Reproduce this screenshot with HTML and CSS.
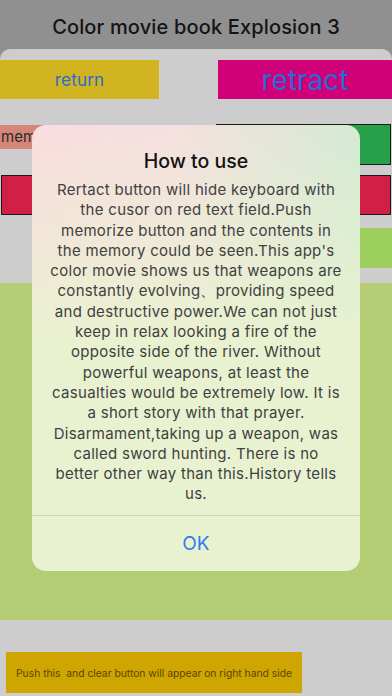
FILE: index.html
```html
<!DOCTYPE html>
<html lang="en">
<head>
<meta charset="utf-8">
<title>Color movie book Explosion 3</title>
<link rel="stylesheet" href="styles.css">
</head>
<body>
<div class="app">
  <header class="titlebar">Color movie book Explosion 3</header>
  <main class="sheet">
    <div class="btnrow">
      <div class="btn btn-return">return</div>
      <div class="btn btn-retract">retract</div>
    </div>
    <div class="row row-a">
      <div class="memo">memorize</div>
      <div class="field field-green"></div>
    </div>
    <div class="row row-b">
      <div class="field field-red left"></div>
      <div class="field field-red"></div>
    </div>
    <div class="row row-c">
      <div class="spacer"></div>
      <div class="lightgreen"></div>
    </div>
    <div class="greenarea"></div>
    <div class="bottom">
      <div class="pushbtn">Push this  and clear button will appear on right hand side</div>
    </div>
  </main>

  <div class="modal">
    <div class="modal-body">
      <div class="modal-title">How to use</div>
      <div class="modal-text">Rertact button will hide keyboard with<br>the cusor on red text field.Push<br>memorize button and the contents in<br>the memory could be seen.This app's<br>color movie shows us that weapons are<br>constantly evolving、providing speed<br>and destructive power.We can not just<br>keep in relax looking a fire of the<br>opposite side of the river. Without<br>powerful weapons, at least the<br>casualties would be extremely low. It is<br>a short story with that prayer.<br>Disarmament,taking up a weapon, was<br>called sword hunting. There is no<br>better other way than this.History tells<br>us.</div>
    </div>
    <div class="modal-action">OK</div>
  </div>
</div>
</body>
</html>
```
FILE: styles.css
```css
* { box-sizing: border-box; }
html, body { margin: 0; padding: 0; }
body {
  width: 392px;
  height: 696px;
  overflow: hidden;
  font-family: "Inter", "Noto Sans", sans-serif;
  background: #8f908f;
}
.app {
  position: relative;
  width: 392px;
  height: 696px;
  background: #8f908f;
}
.titlebar {
  height: 49px;
  display: flex;
  align-items: center;
  justify-content: center;
  padding-top: 5px;
  font-size: 20px;
  font-weight: 500;
  letter-spacing: 0.15px;
  color: #141414;
}
.sheet {
  height: 647px;
  background: #cdcdcd;
  border-radius: 10px 10px 0 0;
  display: flex;
  flex-direction: column;
}
.btnrow {
  margin-top: 11px;
  height: 39px;
  display: flex;
  justify-content: space-between;
}
.btn {
  height: 39px;
  display: flex;
  align-items: center;
  justify-content: center;
  color: #2b6ad6;
}
.btn-return {
  width: 159px;
  background: #d2b320;
  font-size: 17px;
  letter-spacing: 0.2px;
}
.btn-retract {
  width: 174px;
  background: #cf0078;
  font-size: 28px;
}
.row {
  display: flex;
  justify-content: space-between;
}
.row-a {
  margin-top: 25px;
  height: 41px;
}
.memo {
  width: 159px;
  height: 24px;
  margin-top: 1px;
  background: #d48779;
  color: #2a2a2a;
  font-size: 15px;
  line-height: 24px;
  padding-left: 1px;
  overflow: hidden;
}
.field {
  width: 175px;
  border: 1px solid #1a1a1a;
  margin-right: 1px;
}
.field-green { background: #26a049; }
.row-b {
  margin-top: 10px;
  height: 40px;
}
.field-red { background: #d21f46; }
.field-red.left { width: 159px; margin-left: 1px; margin-right: 0; }
.row-c {
  margin-top: 13px;
  height: 40px;
}
.spacer { width: 159px; }
.lightgreen {
  width: 175px;
  background: #9ccf5e;
}
.greenarea {
  margin-top: 15px;
  height: 337px;
  background: #b4cd75;
}
.bottom {
  flex: 1;
  padding: 32px 0 0 6px;
}
.pushbtn {
  width: 296px;
  height: 41px;
  background: #cfa501;
  color: #594700;
  font-size: 10.3px;
  display: flex;
  align-items: center;
  justify-content: center;
  white-space: pre;
}
.modal {
  position: absolute;
  left: 32px;
  top: 125px;
  width: 328px;
  height: 446px;
  border-radius: 14px;
  overflow: hidden;
  display: flex;
  flex-direction: column;
  background:
    linear-gradient(to bottom, rgba(233,242,208,0) 0%, rgba(233,242,208,0.6) 30%, #e9f2d0 50%, #e9f2d0 100%),
    linear-gradient(to right, #fadcdf 0%, #f5e0df 45%, #d3ead3 100%);
}
.modal-body {
  height: 391px;
  border-bottom: 1px solid #cfd8b6;
  padding-top: 25px;
  text-align: center;
}
.modal-title {
  font-size: 19.5px;
  font-weight: 500;
  line-height: 22px;
  color: #121212;
  margin-bottom: 8px;
}
.modal-text {
  font-size: 15px;
  line-height: 20.3px;
  letter-spacing: 0.3px;
  color: #404040;
  white-space: nowrap;
}
.modal-action {
  flex: 1;
  display: flex;
  align-items: center;
  justify-content: center;
  font-size: 19px;
  color: #2f7cf5;
}
```
